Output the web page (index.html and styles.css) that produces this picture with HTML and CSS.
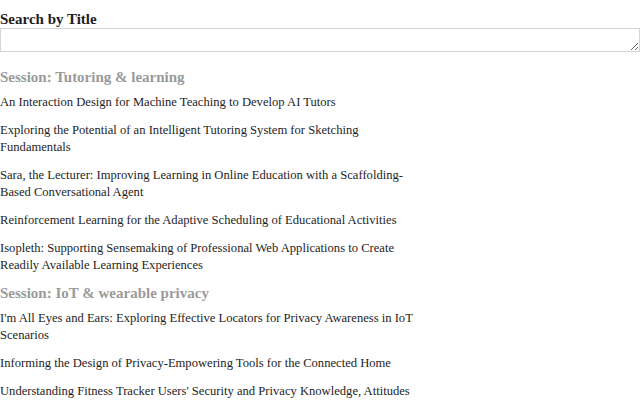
FILE: index.html
```html
<!DOCTYPE html>
<html>
<head>
<meta charset="utf-8">
<link rel="stylesheet" href="styles.css">
</head>
<body>
<div class="page">
  <label class="search-label" for="q">Search by Title</label>
  <textarea id="q" class="search-box"></textarea>
  <div class="list">
    <h2 class="session">Session: Tutoring &amp; learning</h2>
    <p class="paper">An Interaction Design for Machine Teaching to Develop AI Tutors</p>
    <p class="paper">Exploring the Potential of an Intelligent Tutoring System for Sketching Fundamentals</p>
    <p class="paper">Sara, the Lecturer: Improving Learning in Online Education with a Scaffolding-Based Conversational Agent</p>
    <p class="paper">Reinforcement Learning for the Adaptive Scheduling of Educational Activities</p>
    <p class="paper">Isopleth: Supporting Sensemaking of Professional Web Applications to Create Readily Available Learning Experiences</p>
    <h2 class="session">Session: IoT &amp; wearable privacy</h2>
    <p class="paper">I'm All Eyes and Ears: Exploring Effective Locators for Privacy Awareness in IoT Scenarios</p>
    <p class="paper">Informing the Design of Privacy-Empowering Tools for the Connected Home</p>
    <p class="paper">Understanding Fitness Tracker Users' Security and Privacy Knowledge, Attitudes and Behaviours</p>
  </div>
</div>
</body>
</html>
```
FILE: styles.css
```css
html, body {
  margin: 0;
  padding: 0;
  background: #fff;
}
body {
  font-family: "Liberation Serif", "DejaVu Serif", serif;
  color: #222;
}
.page {
  display: flex;
  flex-direction: column;
}
.search-label {
  display: block;
  font-size: 15px;
  font-weight: bold;
  line-height: 18px;
  padding-top: 10px;
  margin-bottom: 0;
  color: #1e1e1e;
}
.search-box {
  display: block;
  box-sizing: border-box;
  width: 640px;
  height: 24px;
  margin: 0;
  border: 1px solid #d4d4d4;
  padding: 2px;
  font-family: inherit;
}
.list {
  width: 420px;
  padding-top: 17px;
}
.session {
  margin: 0 0 8px 0;
  font-size: 15px;
  line-height: 17px;
  font-weight: bold;
  color: #9a9a9a;
}
.paper {
  margin: 0 0 11px 0;
  font-size: 12.6px;
  line-height: 17px;
  color: #1e1e1e;
}
```
